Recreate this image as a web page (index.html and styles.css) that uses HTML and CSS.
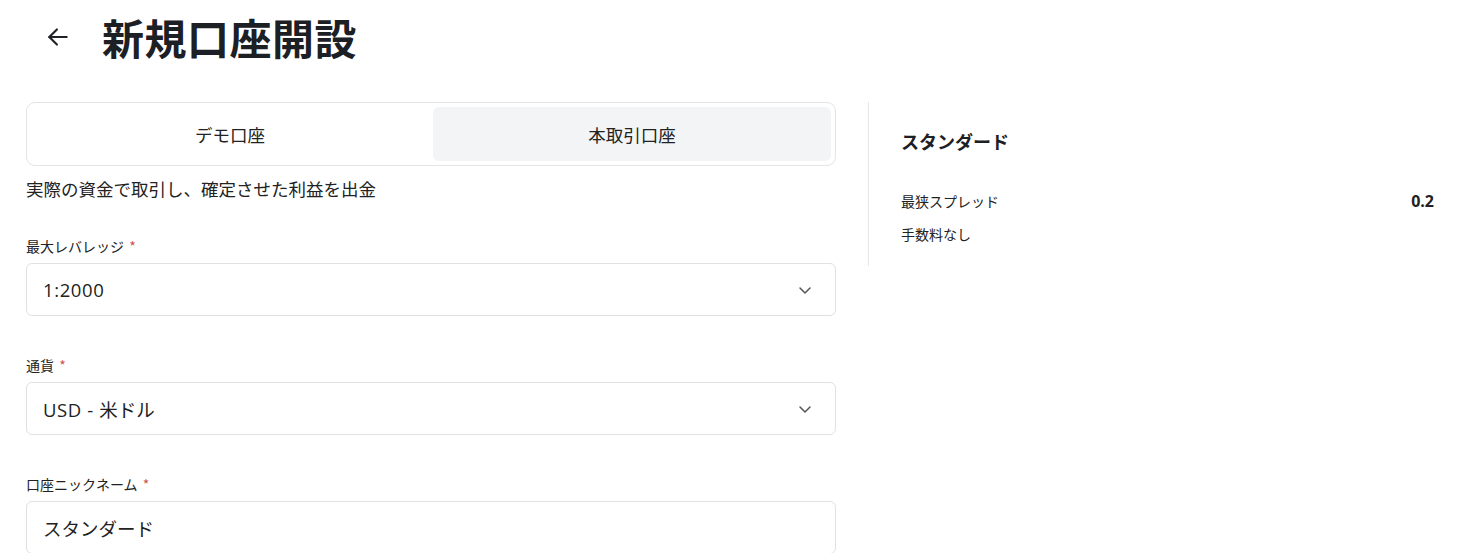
FILE: index.html
```html
<!DOCTYPE html>
<html lang="ja">
<head>
<meta charset="utf-8">
<link rel="stylesheet" href="styles.css">
</head>
<body>
<div class="page">
  <header class="header">
    <button class="back" aria-label="戻る">
      <svg width="26" height="26" viewBox="0 0 24 24" fill="none" stroke="#1f2328" stroke-width="2" stroke-linecap="round" stroke-linejoin="round"><path d="M20 12H4"/><path d="M11 5l-7 7 7 7"/></svg>
    </button>
    <h1 class="title">新規口座開設</h1>
  </header>
  <div class="content">
    <div class="form">
      <div class="tabs">
        <div class="tab">デモ口座</div>
        <div class="tab active">本取引口座</div>
      </div>
      <p class="desc">実際の資金で取引し、確定させた利益を出金</p>
      <div class="field">
        <label class="label">最大レバレッジ <span class="req">*</span></label>
        <div class="select">
          <span class="value latin">1:2000</span>
          <svg class="chev" width="16" height="16" viewBox="0 0 16 16" fill="none" stroke="#555" stroke-width="1.5" stroke-linecap="round" stroke-linejoin="round"><path d="M3 6l5 5 5-5"/></svg>
        </div>
      </div>
      <div class="field">
        <label class="label">通貨 <span class="req">*</span></label>
        <div class="select">
          <span class="value"><span class="latin">USD - </span>米ドル</span>
          <svg class="chev" width="16" height="16" viewBox="0 0 16 16" fill="none" stroke="#555" stroke-width="1.5" stroke-linecap="round" stroke-linejoin="round"><path d="M3 6l5 5 5-5"/></svg>
        </div>
      </div>
      <div class="field">
        <label class="label">口座ニックネーム <span class="req">*</span></label>
        <div class="select input">
          <span class="value">スタンダード</span>
        </div>
      </div>
    </div>
    <aside class="side">
      <h2 class="side-title">スタンダード</h2>
      <div class="row">
        <span>最狭スプレッド</span>
        <span class="num">0.2</span>
      </div>
      <div class="row">
        <span>手数料なし</span>
      </div>
    </aside>
  </div>
</div>
</body>
</html>
```

FILE: styles.css
```css
* { box-sizing: border-box; }
html, body { margin: 0; padding: 0; background: #fff; }
body {
  font-family: "Noto Sans CJK JP", "Noto Sans", sans-serif;
  color: #1f2328;
  overflow: hidden;
}
.page { padding: 0 0 0 26px; }
.header {
  display: flex;
  align-items: center;
  height: 78px;
  padding-bottom: 4px;
}
.back {
  border: 0;
  background: none;
  padding: 0;
  margin-left: 18px;
  width: 28px;
  height: 28px;
  display: flex;
  align-items: center;
  justify-content: center;
}
.title {
  margin: 0 0 0 30px;
  font-size: 42px;
  font-weight: 700;
  line-height: 1;
  letter-spacing: 0.5px;
  color: #1c2024;
}
.content {
  display: flex;
  margin-top: 24px;
  align-items: flex-start;
}
.form { width: 810px; flex: none; }
.tabs {
  display: flex;
  border: 1px solid #e3e4e6;
  border-radius: 9px;
  padding: 4px;
  height: 64px;
  gap: 4px;
}
.tab {
  flex: 1;
  display: flex;
  align-items: center;
  justify-content: center;
  font-size: 17.5px;
  color: #222;
  border-radius: 6px;
}
.tab.active { background: #f3f4f6; }
.desc {
  margin: 10px 0 0;
  font-size: 17.5px;
  line-height: 26px;
  color: #222;
}
.field { margin-top: 34px; }
.field + .field { margin-top: 39px; }
.label {
  display: block;
  font-size: 14px;
  line-height: 20px;
  color: #222;
  margin-bottom: 7px;
}
.req { color: #d05050; margin-left: 2px; }
.select {
  display: flex;
  align-items: center;
  justify-content: space-between;
  height: 53px;
  border: 1px solid #e0e1e3;
  border-radius: 6px;
  padding: 0 22px 0 16px;
}
.value { font-size: 18.5px; color: #222; }
.latin { font-family: "Open Sans", "Noto Sans", sans-serif; letter-spacing: 0.6px; }
.chev { flex: none; }
.side {
  flex: 1;
  border-left: 1px solid #e6e7e9;
  margin-left: 32px;
  padding: 20px 31px 20px 32px;
  min-height: 164px;
}
.side-title {
  margin: 4px 0 0;
  font-size: 18px;
  font-weight: 700;
  line-height: 30px;
  color: #1c2024;
}
.row {
  display: flex;
  justify-content: space-between;
  align-items: center;
  font-size: 14px;
  line-height: 22px;
  color: #222;
}
.side-title + .row { margin-top: 34px; }
.row + .row { margin-top: 11px; }
.num { font-family: "Open Sans", "Noto Sans", sans-serif; font-weight: 700; font-size: 16px; }
```
